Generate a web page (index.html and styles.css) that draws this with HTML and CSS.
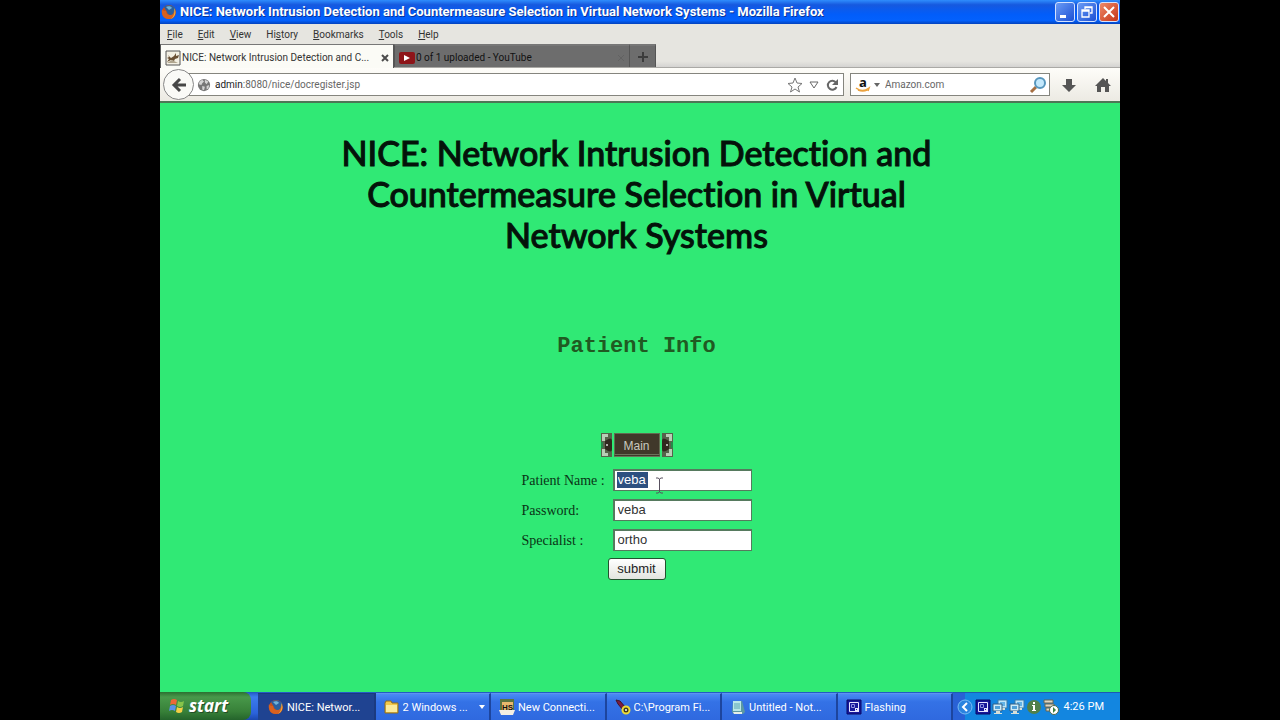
FILE: index.html
```html
<!DOCTYPE html>
<html lang="en">
<head>
<meta charset="utf-8">
<title>NICE: Network Intrusion Detection and Countermeasure Selection in Virtual Network Systems</title>
<link rel="stylesheet" href="styles.css">
</head>
<body>
<svg class="defs" aria-hidden="true">
  <symbol id="firefox" viewBox="0 0 16 16">
    <circle cx="8" cy="8" r="7" fill="#c8501c"/>
    <path d="M3 3C5 1 11 0 14 4c1 3 0 5-2 7C9 12 6 10 6 8c-1-2-2-3-3-5z" fill="#2b5f9e"/>
    <path d="M5 3c2-1 5-1 6 1L8 6z" fill="#6fb2d8"/>
    <path d="M1 5c1 2 2 2 4 2 0 2 1 4 4 4 3 0 4-2 4-5 2 4 1 9-5 9S0 10 1 5z" fill="#d8611f"/>
    <path d="M13 4c3 4 1 9-3 11 3-3 4-6 3-11z" fill="#f0b040"/>
  </symbol>
  <symbol id="network" viewBox="0 0 16 16">
    <path d="M6 1h9v8H6z" fill="#bfe6f8" stroke="#3f7ba8"/>
    <path d="M8 3h5v4H8z" fill="#62b2e6"/>
    <path d="M9 9h4v2H9z" fill="#d6dfd8"/>
    <path d="M1 5h9v7H1z" fill="#cdebf8" stroke="#315f85"/>
    <path d="M3 7h5v3H3z" fill="#4f9fd8"/>
    <path d="M4 12h4v2h2v1H2v-1h2z" fill="#d6dfd8"/>
  </symbol>
  <symbol id="flash" viewBox="0 0 16 16">
    <path d="M1 1h14v14H1z" fill="#17179a" stroke="#080866"/>
    <path d="M3.500 3.500h9v9h-9z" fill="none" stroke="#e4e4ff"/>
    <path d="M5.500 5.500h3v3h-3z" fill="none" stroke="#8e8ee0"/>
    <path d="M9 9h4v4H9z" fill="#e4e4ff"/>
    <path d="M10 10h1v1h-1z" fill="#17179a"/>
  </symbol>
</svg>
<div class="desktop">
  <header class="titlebar">
    <svg class="icon16"><use href="#firefox"/></svg>
    <span class="window-title">NICE: Network Intrusion Detection and Countermeasure Selection in Virtual Network Systems - Mozilla Firefox</span>
    <div class="window-buttons">
      <button class="winbtn" aria-label="Minimize"><svg viewBox="0 0 16 16"><path d="M3 11h6v3H3z" fill="#fff"/></svg></button>
      <button class="winbtn" aria-label="Restore"><svg viewBox="0 0 16 16"><path d="M6 5V3h7v6h-2M6 3.500h7M3 6h7v7H3zM3 7h7" fill="none" stroke="#fff" stroke-width="1.300"/></svg></button>
      <button class="winbtn close" aria-label="Close"><svg viewBox="0 0 16 16"><path d="M3 3l10 10M13 3L3 13" stroke="#fff" stroke-width="2"/></svg></button>
    </div>
  </header>
  <nav class="menubar">
    <button><u>F</u>ile</button><button><u>E</u>dit</button><button><u>V</u>iew</button><button>Hi<u>s</u>tory</button><button><u>B</u>ookmarks</button><button><u>T</u>ools</button><button><u>H</u>elp</button>
  </nav>
  <div class="tabs">
    <div class="tab active">
      <svg class="icon16" viewBox="0 0 16 16"><path d="M1 1h14v14H1z" fill="#f4f0e4" stroke="#555"/><path d="M3 5l3 3 3-2 2-3v3l3-1-1 3-3 1-1 2-3-1-4 2 2-3-2-1 2-1z" fill="#6b5135"/><path d="M2 13l5-3 6 3z" fill="#b0a58e"/></svg>
      <button class="tab-label">NICE: Network Intrusion Detection and C...</button>
      <button class="tab-close" aria-label="Close tab"><svg viewBox="0 0 8 8"><path d="M1 1l6 6M7 1L1 7" stroke="#4c4c4c" stroke-width="2"/></svg></button>
    </div>
    <div class="tab">
      <svg class="icon16" viewBox="0 0 16 16"><rect x="0" y="2" width="16" height="12" rx="2" fill="#8e1519"/><path d="M5 5l6 3-6 3z" fill="#fff"/></svg>
      <button class="tab-label">0 of 1 uploaded - YouTube</button>
      <button class="tab-close" aria-label="Close tab"><svg viewBox="0 0 8 8"><path d="M1 1l6 6M7 1L1 7" stroke="#626262"/></svg></button>
    </div>
    <button class="newtab" aria-label="New tab"><svg viewBox="0 0 12 12"><path d="M6 1v10M1 6h10" stroke="#3c3c3c" stroke-width="2"/></svg></button>
  </div>
  <div class="navbar">
    <button class="back" aria-label="Back"><svg viewBox="0 0 16 16"><path d="M9 2L3 8l6 6M3 8h12" fill="none" stroke="#474747" stroke-width="3"/></svg></button>
    <div class="urlbar">
      <svg class="globe" viewBox="0 0 16 16"><circle cx="8" cy="8" r="7" fill="#777"/><path d="M3 4l3-2 2 2-2 2-1 2-3-1zM9 2l4 2-2 3-2-2zM6 9l3 1-1 4-2-1zM11 9l3-1-1 4-2 1z" fill="#d4d4d4"/></svg>
      <span class="url"><span class="host">admin</span>:8080/nice/docregister.jsp</span>
      <button class="plain" aria-label="Bookmark"><svg class="icon16" viewBox="0 0 16 16"><path d="M8 1l2 5 5 .5-4 3.500L12.500 15 8 12l-4.500 3L5 10 1 6.500 6 6z" fill="#fff" stroke="#777"/></svg></button>
      <button class="plain" aria-label="History list"><svg class="drop" viewBox="0 0 10 10"><path d="M1 2h8L5 8z" fill="#fff" stroke="#666"/></svg></button>
      <button class="plain" aria-label="Reload"><svg class="reload" viewBox="0 0 14 14"><path d="M11 4.500A4.500 4.500 0 1 0 11.500 9" fill="none" stroke="#666" stroke-width="2"/><path d="M13 1v6H7z" fill="#666"/></svg></button>
    </div>
    <div class="search">
      <svg class="icon16" viewBox="0 0 16 16"><text x="4" y="10" class="amazon">a</text><path d="M1 11c4 3 9 3 13 0l-1 3M3 13q5 2 9 0" fill="none" stroke="#eba23d" stroke-width="1.500"/></svg>
      <svg class="caret" viewBox="0 0 6 4"><path d="M0 0h6L3 4z" fill="#666"/></svg>
      <input class="search-input" aria-label="Search" placeholder="Amazon.com">
      <button class="plain" aria-label="Search"><svg class="icon18" viewBox="0 0 18 18"><path d="M2 16l5-5" stroke="#a66f42" stroke-width="3"/><circle cx="11" cy="7" r="5" fill="#c3e8fc" stroke="#5796bd" stroke-width="2"/></svg></button>
    </div>
    <button class="tool" aria-label="Downloads"><svg class="icon16" viewBox="0 0 16 16"><path d="M5 2h6v6h4l-7 7-7-7h4z" fill="#555"/></svg></button>
    <button class="tool" aria-label="Home"><svg class="icon16" viewBox="0 0 16 16"><path d="M8 1L0 9h2v6h4v-5h4v5h4V9h2l-3-3V2h-2v2z" fill="#555"/></svg></button>
  </div>
  <main class="page">
    <h1>NICE: Network Intrusion Detection and<br>Countermeasure Selection in Virtual<br>Network Systems</h1>
    <h2>Patient Info</h2>
    <div class="main-nav">
      <svg class="bracket" viewBox="0 0 11 24"><path d="M0 0h11v24H0z" fill="#56634b"/><path d="M1 1h6v3H4v4H1zM1 23h6v-3H4v-4H1z" fill="#b9cdb6"/><path d="M4 8q7-5 7 0v8q0 5-7 0z" fill="#30281e"/><circle cx="6" cy="12" r="1" fill="#ddd"/><path d="M0 9h2v6H0z" fill="#278849"/></svg>
      <a href="#main">Main</a>
      <svg class="bracket flip" viewBox="0 0 11 24"><path d="M0 0h11v24H0z" fill="#56634b"/><path d="M1 1h6v3H4v4H1zM1 23h6v-3H4v-4H1z" fill="#b9cdb6"/><path d="M4 8q7-5 7 0v8q0 5-7 0z" fill="#30281e"/><circle cx="6" cy="12" r="1" fill="#ddd"/><path d="M0 9h2v6H0z" fill="#278849"/></svg>
    </div>
    <form class="patient">
      <label for="name">Patient Name :</label>
      <div class="field">
        <input id="name" class="selected" value="veba" size="4">
        <svg class="cursor" viewBox="0 0 9 17"><path d="M1 1h2l1.500 1L6 1h2M4.500 2v13M1 16h2l1.500-1L6 16h2" fill="none" stroke="#58505f"/></svg>
      </div>
      <label for="password">Password:</label>
      <div class="field"><input id="password" value="veba"></div>
      <label for="specialist">Specialist :</label>
      <div class="field"><input id="specialist" value="ortho"></div>
      <button type="button" class="submit">submit</button>
    </form>
  </main>
  <footer class="taskbar">
    <button class="start"><svg class="icon18" viewBox="0 0 18 18"><path d="M3 3q3-2 6 0L8 8q-3-2-6 0z" fill="#ed6837"/><path d="M10 4q3 2 6 0l-1 5q-3 2-6 0z" fill="#86c44a"/><path d="M2 9q3-2 6 0l-1 5q-3-2-6 0z" fill="#5b91e8"/><path d="M9 10q3 2 6 0l-1 5q-3 2-6 0z" fill="#f4cf45"/></svg>start</button>
    <div class="tasks">
      <button class="task current"><svg class="icon16"><use href="#firefox"/></svg><span>NICE: Networ...</span></button>
      <button class="task"><svg class="icon16" viewBox="0 0 16 16"><path d="M1 4l1-2h5l1 2h6v10H1z" fill="#f2c84b" stroke="#8f6c1e"/><path d="M2 6h11v7H2z" fill="#fbea9b"/></svg><span>2 Windows ...</span><svg class="caret" viewBox="0 0 6 4"><path d="M0 0h6L3 4z" fill="#fff"/></svg></button>
      <button class="task"><svg class="icon16" viewBox="0 0 16 16"><path d="M1 0h14v11H1z" fill="#5b7440"/><path d="M3 3h11v8H3z" fill="#e9b86d"/><path d="M0 11h16l-2 5H2z" fill="#f4efe2"/><text x="3" y="11" class="hs">HS</text></svg><span>New Connecti...</span></button>
      <button class="task"><svg class="icon16" viewBox="0 0 16 16"><path d="M1 1l4 1 6 7-3 2-5-6z" fill="#7b1c43" stroke="#411227"/><circle cx="11" cy="11" r="3.500" fill="#413b1b" stroke="#eddb36" stroke-width="2"/><circle cx="11" cy="11" r="1" fill="#fff"/></svg><span>C:\Program Fi...</span></button>
      <button class="task"><svg class="icon16" viewBox="0 0 16 16"><path d="M3 2h9l3 11-2 2H4L2 13z" fill="#5b98a3"/><path d="M3 2h8v10H3z" fill="#b9e7e8"/><path d="M4 5h6M4 7h6M4 9h6" stroke="#5ba6b4"/><path d="M3 13h9v2H4z" fill="#e5eee8"/></svg><span>Untitled - Not...</span></button>
      <button class="task"><svg class="icon16"><use href="#flash"/></svg><span>Flashing</span></button>
    </div>
    <div class="tray">
      <button class="plain expand" aria-label="Show hidden icons"><svg class="icon16" viewBox="0 0 16 16"><circle cx="8" cy="8" r="7" fill="#2b83df" stroke="#79bcf5"/><path d="M10 4L6 8l4 4" fill="none" stroke="#fff" stroke-width="2"/></svg></button>
      <svg class="icon16"><use href="#flash"/></svg>
      <svg class="icon16"><use href="#network"/></svg>
      <svg class="icon16"><use href="#network"/></svg>
      <svg class="icon16" viewBox="0 0 16 16"><circle cx="8" cy="8" r="7" fill="#51804a"/><path d="M7 3h2v2H7zM6 6h3v5h1v1H6v-1h1V7H6z" fill="#fff"/></svg>
      <svg class="icon16" viewBox="0 0 16 16"><path d="M1 1h9v3H1zM2 5h9v3H2zM3 9h7v3H3z" fill="#ddd6c5" stroke="#696753"/><circle cx="11" cy="11" r="4.500" fill="#fff" stroke="#536b49"/><path d="M10 8l3 3-3 3z" fill="#3f8040"/></svg>
      <time>4:26 PM</time>
    </div>
  </footer>
</div>
</body>
</html>
```
FILE: styles.css
```css
* { box-sizing: border-box; }
body { margin: 0; background: #000; font-family: Roboto, "Noto Sans", sans-serif; font-size: 10px; line-height: 15px; color: #333; }
button { font: inherit; color: inherit; background: none; border: 0; padding: 0; }
svg { display: block; flex: none; overflow: visible; }
.defs { position: absolute; width: 0; height: 0; }
.icon16 { width: 16px; height: 16px; }
.icon18 { width: 18px; height: 18px; }
.caret { width: 6px; height: 4px; }
.desktop { width: 75%; min-height: 100vh; margin: 0 auto; display: flex; flex-direction: column; overflow: hidden; }

.titlebar { display: flex; align-items: center; gap: 3px; height: 24px; padding: 0 1px; background: linear-gradient(#2f8dfd, #1659df 20%, #025dfa 60%, #0361fd 85%, #0342bd); color: #fff; }
.window-title { flex: 1; min-width: 0; overflow: hidden; white-space: nowrap; font: bold 13px/20px Roboto, sans-serif; text-shadow: 1px 1px #0a3398; }
.window-buttons { display: flex; gap: 2px; }
.winbtn { width: 20px; height: 20px; border: 1px solid #d4e2ff; border-radius: 3px; background: linear-gradient(135deg, #6a9bf5, #1c50d4); }
.winbtn.close { background: linear-gradient(135deg, #ee8a6a, #c63416); }
.winbtn svg { width: 16px; height: 16px; margin: 0 auto; }

.menubar { display: flex; gap: 15px; align-items: center; height: 20px; padding: 0 7px; background: #e6e5e0; }
.tabs { display: flex; height: 24px; background: linear-gradient(#e6e5e0 75%, #d4d3d1); border-bottom: 1px solid #aaa9a5; }
.tab { display: flex; align-items: center; gap: 1px; flex: 0 1 236px; min-width: 0; padding: 2px 4px 0; background: #6d6d6d; border: 1px solid #555; border-bottom: 0; border-top: 2px solid #777; color: #111; }
.tab.active { background: #fbfbf6; border-top: 1px solid #777; color: #333; height: 24px; flex-basis: 234px; }
.tab-label { flex: 1; min-width: 0; overflow: hidden; white-space: nowrap; text-align: left; }
.tab-close svg { width: 8px; height: 8px; }
.newtab { display: grid; place-items: center; width: 26px; background: #6d6d6d; border-top: 2px solid #777; border-right: 1px solid #555; }
.newtab svg { width: 12px; height: 12px; }

.navbar { display: flex; align-items: center; height: 35px; padding: 0 9px 0 3px; background: linear-gradient(#fefdf9, #eceae3); border-bottom: 2px solid #4d7656; }
.back { z-index: 1; display: grid; place-items: center; width: 31px; height: 31px; border: 1px solid #888; border-radius: 50%; background: #fafaf7; }
.back svg { width: 16px; height: 16px; }
.urlbar, .search { display: flex; align-items: center; height: 23px; border: 1px solid #85857e; background: #fff; }
.urlbar { flex: 1; min-width: 0; margin-left: -8px; padding: 0 4px 0 11px; border-left: 0; }
.globe { width: 14px; height: 14px; margin-right: 4px; }
.url { flex: 1; min-width: 0; overflow: hidden; white-space: nowrap; color: #666; }
.host { color: #222; }
.drop { width: 10px; height: 10px; margin: 0 6px; }
.reload { width: 14px; height: 14px; }
.search { width: 200px; gap: 3px; margin: 0 11px 0 6px; padding: 0 2px 0 4px; }
.search-input { flex: 1; min-width: 0; border: 0; padding: 0 2px; font: inherit; background: none; }
.search-input::placeholder { color: #666; }
.amazon { font: bold 13px "Open Sans", sans-serif; fill: #111; }
.hs { font: bold 8px "Liberation Sans", sans-serif; fill: #111; }
.tool + .tool { margin-left: 18px; }

.page { flex: 1; display: flex; flex-direction: column; align-items: center; padding: 29px 7px 40px 0; background: #30e975; color: #000; }
h1 { margin: 0; font: 500 34px/41px Lato, sans-serif; font-variant-ligatures: none; text-align: center; color: #04120a; -webkit-text-stroke: 1px #04120a; }
h2 { margin: 79px 0 73px; font: bold 22px/26px "Liberation Mono", monospace; color: #205a22; }
.main-nav { display: flex; gap: 2px; height: 24px; }
.main-nav a { width: 46px; border: 1px solid #626b51; border-bottom: 3px double #6c725b; background: #40382a; color: #c9c8bf; font: 12px/24px "Liberation Sans", sans-serif; text-align: center; text-decoration: none; }
.bracket { width: 11px; height: 24px; }
.flip { transform: scaleX(-1); }
.patient { display: grid; grid-template-columns: 91px 139px; row-gap: 6px; margin-top: 11px; align-items: center; font: 14px/22px "Liberation Serif", serif; color: #0a3416; }
.patient label { white-space: nowrap; padding-top: 2px; }
.field { position: relative; display: flex; height: 22px; padding: 1px 2px 2px; background: #fff; border: 1px solid #567a5e; border-top: 2px solid #567a5e; border-left: 2px solid #567a5e; }
.field input { width: 100%; border: 0; padding: 0 1px; font: 13px/16px "Liberation Sans", sans-serif; color: #333; background: none; }
.field .selected { width: 31px; height: 16px; background: #2d5080; color: #fff; }
.cursor { position: absolute; left: 40px; top: 6px; width: 9px; height: 17px; }
.submit { grid-column: 1 / -1; justify-self: center; width: 58px; height: 22px; border: 1px solid #24512f; border-radius: 3px; background: linear-gradient(#fff, #e2e4df); color: #222; font: 13px/20px "Liberation Sans", sans-serif; }

.taskbar { display: flex; height: 28px; font-size: 11px; background: linear-gradient(#2157c0, #3c7ced 18%, #2b63dc 75%, #1b48b0); color: #fff; }
.start { display: flex; align-items: center; gap: 3px; width: 91px; padding-left: 8px; border-radius: 0 8px 8px 0; background: linear-gradient(#2c6f31, #48984a 18%, #378038 70%, #24632b); color: #fff; font: italic bold 17px/26px "Open Sans", sans-serif; text-shadow: 1px 1px #234e27; }
.tasks { display: flex; flex: 1; min-width: 0; padding: 1px 0 0 7px; }
.task { display: flex; flex: 1; min-width: 0; align-items: center; gap: 3px; padding: 0 4px 0 8px; border-right: 2px solid #1d459e; border-top: 1px solid #5e94ef; background: linear-gradient(#4a8af4, #3472e6 30%, #2f69df); white-space: nowrap; text-align: left; }
.task span { flex: 1; min-width: 0; overflow: hidden; }
.task.current { background: #1f4391; border-color: #1b3a80; padding-left: 10px; }
.tray { display: flex; align-items: center; gap: 1px; width: 167px; padding: 0 16px 0 4px; background: linear-gradient(90deg, #2961d6 12px, #1386e0 12px); border-top: 1px solid #1d59b3; }
.tray .expand { margin-right: 1px; }
.tray time { margin-left: auto; white-space: nowrap; }
```
